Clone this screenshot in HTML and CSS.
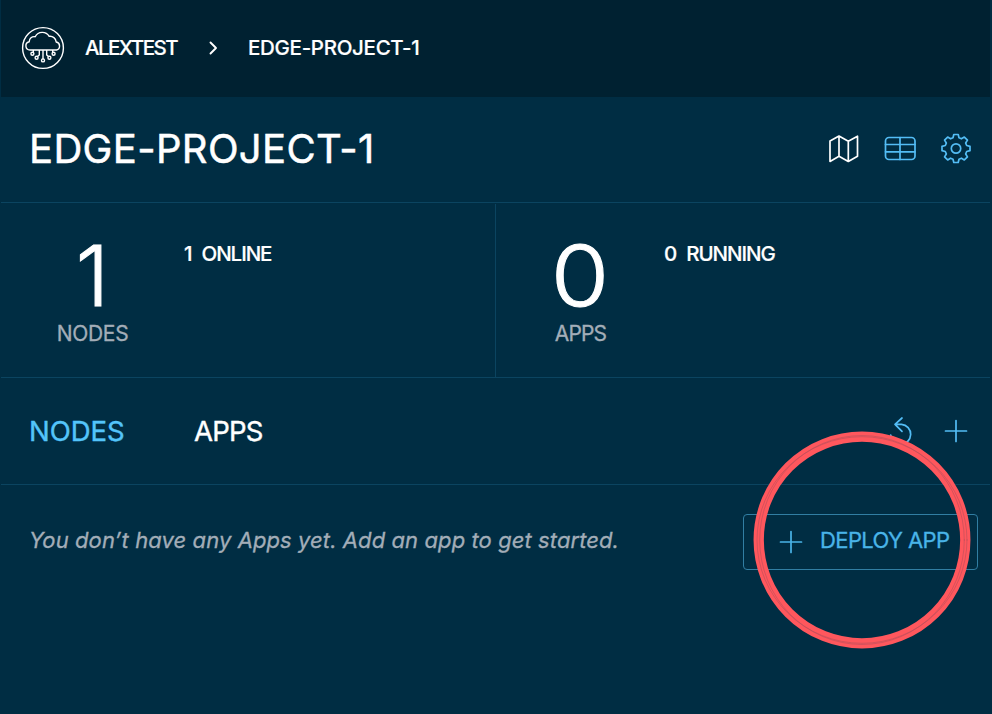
FILE: index.html
```html
<!DOCTYPE html>
<html lang="en">
<head>
<meta charset="utf-8">
<title>EDGE-PROJECT-1</title>
<link rel="stylesheet" href="styles.css">
</head>
<body>
<div class="page">
  <nav class="topbar">
    <svg class="logo" width="44" height="44" viewBox="0 0 44 44">
      <circle cx="22" cy="22" r="20.4"/>
      <path d="M35.500 24H9a4.200 4.200 0 0 1-.8-8.300a5 5 0 0 1 6-5a8 8 0 0 1 14-.400a6.200 6.200 0 0 1 7 5.700a4.100 4.100 0 0 1 .3 8M12.300 24v2.500M18.300 24v5l-1.800 1.500M22 24v9M25.700 24v5l1.800 1.500M31.700 24v2.500"/>
      <circle cx="11.400" cy="27.800" r="1.500"/><circle cx="15.600" cy="31.800" r="1.500"/><circle cx="22" cy="34.400" r="1.500"/><circle cx="28.400" cy="31.800" r="1.500"/><circle cx="32.600" cy="27.800" r="1.500"/>
    </svg>
    <span class="crumb org">ALEXTEST</span>
    <svg class="chevron" width="10" height="14" viewBox="0 0 10 14"><path d="M1.500 1.500l5.500 5.500-5.500 5.500"/></svg>
    <span class="crumb project">EDGE-PROJECT-1</span>
  </nav>
  <header class="heading">
    <h1>EDGE-PROJECT-1</h1>
    <div class="views">
      <svg class="map" width="32" height="32" viewBox="0 0 32 32"><path d="M2 8l9-5 9.300 5.200 9.200-5v20l-9.200 5.200L11 23.200l-9 5.200zM11 3v20.200M20.300 8.200v20.200"/></svg>
      <svg width="32" height="32" viewBox="0 0 32 32"><rect x="1.500" y="4.500" width="29.500" height="22" rx="3.500"/><path d="M1.500 11.500h29.500M1.500 18.800h29.500M16 4.500v22"/></svg>
      <svg width="32" height="32" viewBox="-16 -15.500 32 32"><circle r="4.700"/><path d="M-3-10.700L-2.200-14H2.200L3-10.700L5.440-9.690L8.340-11.450L11.450-8.340L9.690-5.440L10.700-3L14-2.200V2.200L10.700 3L9.690 5.440L11.450 8.340L8.340 11.450L5.440 9.690L3 10.700L2.200 14H-2.200L-3 10.700L-5.440 9.690L-8.340 11.450L-11.450 8.340L-9.690 5.440L-10.700 3L-14 2.200V-2.200L-10.700-3L-9.690-5.440L-11.450-8.340L-8.340-11.450L-5.440-9.690Z"/></svg>
    </div>
  </header>
  <section class="stats">
    <div class="stat nodes">
      <div class="total"><strong>1</strong><span class="label">NODES</span></div>
      <div class="state"><span>1</span><span>ONLINE</span></div>
    </div>
    <div class="stat apps">
      <div class="total"><strong>0</strong><span class="label">APPS</span></div>
      <div class="state"><span>0</span><span>RUNNING</span></div>
    </div>
  </section>
  <div class="tabs">
    <a class="tab active">NODES</a>
    <a class="tab second">APPS</a>
    <div class="tools">
      <svg width="26" height="30" viewBox="0 0 26 30"><path d="M14 2L7 8.300l7 7M7 8.300h6.500a10 10 0 1 1-10.800 10.700"/></svg>
      <svg width="24" height="24" viewBox="0 0 24 24"><path d="M12 1.500v21M1.500 12h21"/></svg>
    </div>
  </div>
  <main class="content">
    <p>You don’t have any Apps yet. Add an app to get started.</p>
    <button class="deploy">
      <svg width="24" height="24" viewBox="0 0 24 24"><path d="M12 1.500v21M1.500 12h21"/></svg>
      <span>DEPLOY APP</span>
    </button>
  </main>
  <svg class="highlight" width="220" height="220" viewBox="0 0 220 220">
    <circle class="band" cx="110" cy="110" r="103.300"/>
    <ellipse class="stroke" cx="110" cy="110" rx="105" ry="103.300"/>
    <ellipse class="stroke" cx="110" cy="110" rx="102.300" ry="104.500"/>
  </svg>
</div>
</body>
</html>
```
FILE: styles.css
```css
* { box-sizing: border-box; }
body { margin: 0; background: #002d43; color: #fff; font-family: Inter, sans-serif; }
svg { display: block; flex: none; fill: none; stroke: #53bdf5; stroke-width: 1.7; stroke-linecap: round; stroke-linejoin: round; }
.page { position: relative; width: 990px; height: 714px; padding-left: 1px; overflow: hidden; white-space: nowrap; }
.topbar { display: flex; align-items: center; height: 97px; padding: 0 0 1px 20px; background: #002131; }
.logo, .chevron, .map { stroke: #fff; }
.logo { stroke-width: 1.4; }
.chevron { margin: 0 29px 0 31px; stroke-width: 1.9; }
.crumb { font-size: 20.5px; font-weight: 500; line-height: 28px; -webkit-text-stroke: .2px; }
.org { width: 93px; margin-left: 20px; letter-spacing: -1.550px; }
.project { letter-spacing: -.3px; }
.heading { display: flex; align-items: center; justify-content: space-between; height: 106px; padding: 0 18px 2px 28px; border-bottom: 1px solid #0b4460; }
h1 { margin: 0; font-size: 40px; font-weight: 400; line-height: 50px; letter-spacing: .35px; -webkit-text-stroke: .5px; }
.views { display: flex; gap: 24px; }
.stats { display: grid; grid-template-columns: 495px 1fr; height: 175px; border-bottom: 1px solid #0b4460; }
.stat { display: flex; margin-top: 1px; }
.nodes { border-right: 1px solid #0b4460; }
.total { display: flex; flex-direction: column; align-items: center; width: 183px; padding-top: 28px; }
.apps .total { width: 169px; }
strong { font-size: 84.500px; font-weight: 300; line-height: 86px; -webkit-text-stroke: 1px; }
.apps strong { transform: scaleX(1.12); }
.label { margin-top: 2px; color: #a3adb8; font-size: 21px; line-height: 28px; letter-spacing: -.3px; -webkit-text-stroke: .3px; }
.apps .label { letter-spacing: -.8px; }
.state { display: flex; gap: 10px; padding-top: 36px; font-size: 20.500px; font-weight: 500; line-height: 28px; letter-spacing: -1.050px; -webkit-text-stroke: .2px; }
.apps .state { margin-left: -1px; }
.tabs { display: flex; align-items: center; height: 107px; padding: 0 22px 0 28px; border-bottom: 1px solid #0b4460; }
.tab { padding-bottom: 0; font-size: 27.500px; line-height: 37px; letter-spacing: -.05px; -webkit-text-stroke: .4px; }
.second { letter-spacing: -.8px; }
.active { width: 165px; color: #53c4fa; }
.tools { display: flex; align-items: center; gap: 30px; margin-left: auto; }
.content { display: flex; align-items: center; justify-content: space-between; height: 56px; margin-top: 29px; padding: 0 12px 0 28px; }
p { margin: 0; padding-bottom: 4px; color: #a3adb8; font-size: 22px; font-style: italic; line-height: 30px; letter-spacing: .09px; -webkit-text-stroke: .3px; }
.deploy { display: flex; align-items: center; width: 235px; height: 56px; padding: 0 0 1px 35px; border: 1px solid #317ea3; border-radius: 4px; background: none; color: #49b4e8; font: 400 22px/30px Inter, sans-serif; letter-spacing: -.6px; -webkit-text-stroke: .3px; }
.deploy span { margin-left: 17px; padding-bottom: 3px; }
.deploy svg { stroke: #49b4e8; }
.highlight { position: absolute; left: 751.500px; top: 430.300px; }
.band { stroke: #ff575d; stroke-width: 10.300; }
.stroke { stroke: #b94f5b; stroke-width: .6; }
```
